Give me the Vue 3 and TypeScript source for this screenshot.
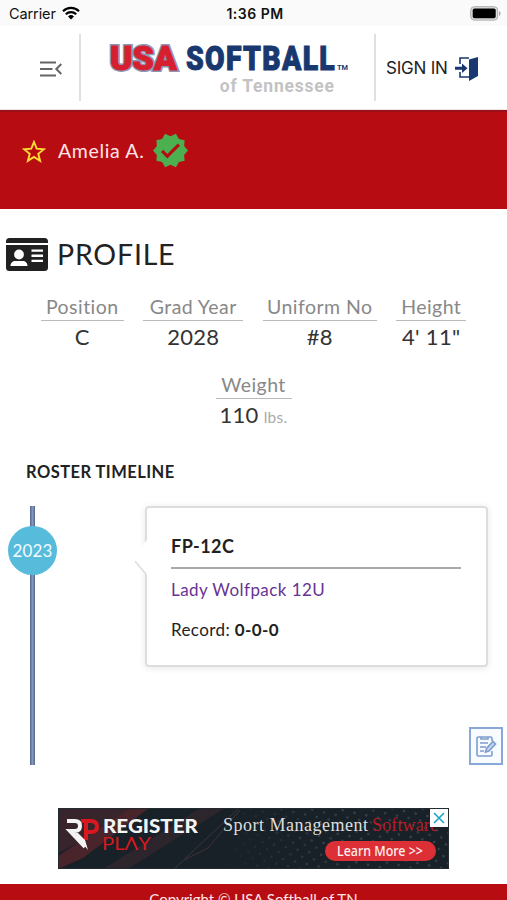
<script setup lang="ts">
interface Stat {
  label: string
  value: string
  unit?: string
  width: number
}

const stats: Stat[] = [
  { label: 'Position', value: 'C', width: 83 },
  { label: 'Grad Year', value: '2028', width: 100 },
  { label: 'Uniform No', value: '#8', width: 114 },
  { label: 'Height', value: '4\' 11"', width: 70 },
  { label: 'Weight', value: '110', unit: 'lbs.', width: 76 },
]
</script>

<template>
  <div class="screen">
    <div class="status">
      <div class="carrier">
        <span>Carrier</span>
        <svg width="18" height="14" viewBox="0 0 18 14">
          <path d="M1 5.2a11.5 11.5 0 0 1 16 0M3.8 8.2a7.5 7.5 0 0 1 10.4 0" fill="none" stroke="#000" stroke-width="2.2" />
          <path d="M9 13.4 6 10.4a4.3 4.3 0 0 1 6 0z" />
        </svg>
      </div>
      <span class="clock">1:36 PM</span>
      <svg class="battery" width="31" height="15" viewBox="0 0 31 15">
        <rect x=".7" y=".7" width="27" height="13.4" rx="3.6" fill="#ddd" stroke="#aaa" />
        <rect x="2.7" y="2.5" width="23" height="9.8" rx="1.8" />
        <path d="M29 5v5q1.6-.8 1.6-2.5T29 5" fill="#aaa" />
      </svg>
    </div>

    <header class="header">
      <button class="menu" aria-label="Menu">
        <svg width="22" height="16" viewBox="0 0 22 16" fill="none" stroke="#666" stroke-width="2">
          <path d="M0 1.5h16M0 8h12.500M0 14.500h16M21.300 3l-5 5 5 5" />
        </svg>
      </button>
      <div class="logo">
        <svg width="246" height="62" viewBox="0 0 246 62">
          <g class="block-type">
            <text x="1" y="36" textLength="67" lengthAdjust="spacingAndGlyphs" class="usa-outline">USA</text>
            <text x="1" y="36" textLength="67" lengthAdjust="spacingAndGlyphs" class="usa">USA</text>
            <text x="89.500" y="36" textLength="173" transform="scale(.86 1)" class="softball">SOFTBALL</text>
          </g>
          <text x="228" y="36" textLength="11" lengthAdjust="spacingAndGlyphs" class="tm">TM</text>
          <text x="120.500" y="58" textLength="124" transform="scale(.92 1)" class="state">of Tennessee</text>
        </svg>
      </div>
      <div class="signin">
        <span>SIGN IN</span>
        <svg width="24" height="26" viewBox="0 0 24 26">
          <path d="M5 8V2h9M5 16v5h9" fill="none" stroke="#18386f" stroke-width="1.600" />
          <path d="M14 3.500 23 1v19l-9 5z" fill="#18386f" />
          <path d="M0 10.700h7V7.500l5.500 4.700L7 17v-3.300H0z" fill="#18386f" />
        </svg>
      </div>
    </header>

    <section class="banner">
      <svg width="24" height="24" viewBox="0 0 24 24">
        <path d="m12 2 2.700 6.700 7.200.5-5.600 4.600 1.800 7.100L12 17l-6.100 3.900 1.800-7.100-5.600-4.600 7.200-.5z" fill="none" stroke="#fddc35" stroke-width="1.900" />
      </svg>
      <span class="name">Amelia A.</span>
      <svg width="35" height="35" viewBox="1 1 22 22">
        <path d="m23 12-2.440-2.780.340-3.680-3.610-.820-1.890-3.180L12 3 8.600 1.540 6.710 4.720l-3.610.810.340 3.680L1 12l2.440 2.780-.340 3.690 3.610.820 1.890 3.180L12 21l3.400 1.460 1.890-3.180 3.610-.820-.340-3.680zm-13 5-4-4 1.410-1.410L10 14.170l6.590-6.590L18 9z" fill="#4caf50" />
      </svg>
    </section>

    <main>
      <h1 class="title">
        <svg width="42" height="33" viewBox="0 0 42 33">
          <path d="M0 5V3.500A3.500 3.500 0 0 1 3.500 0h35A3.500 3.500 0 0 1 42 3.500V5z" fill="#202020" />
          <path d="M0 7h42v22.500a3.500 3.500 0 0 1-3.500 3.500h-35A3.500 3.500 0 0 1 0 29.500z" fill="#202020" />
          <circle cx="13" cy="16.500" r="4.900" fill="#fff" />
          <path d="M4.500 28c0-3 2-5 5-5h7c3 0 5 2 5 5zM25.500 11.500h11.500v2.300H25.500zM25.500 16.600h11.500v2.300H25.500zM25.500 21.700h11.500v2.300H25.500z" fill="#fff" />
        </svg>
        <span>PROFILE</span>
      </h1>

      <div class="stats">
        <div v-for="s in stats" :key="s.label" class="stat" :style="{ width: s.width + 'px' }">
          <div class="label">{{ s.label }}</div>
          <div class="value">{{ s.value }}<small v-if="s.unit">{{ s.unit }}</small></div>
        </div>
      </div>

      <h2 class="subtitle">ROSTER TIMELINE</h2>

      <div class="timeline">
        <div class="track"><div class="year">2023</div></div>
        <article class="card">
          <svg class="pointer" width="17" height="36" viewBox="0 0 17 36">
            <path d="M17 0 2 18l15 17z" fill="#fff" />
            <path d="M5 21.300 16 34" stroke="#ddd" stroke-width="1.500" />
          </svg>
          <h3>FP-12C</h3>
          <a class="team">Lady Wolfpack 12U</a>
          <p>Record: <b>0-0-0</b></p>
        </article>
        <button class="note" aria-label="Notes">
          <svg width="22" height="23" viewBox="0 0 22 23" fill="none" stroke="#7d9dce" stroke-width="1.600">
            <path d="M17 6V3.500Q17 2 15.500 2h-12Q2 2 2 3.500v16Q2 21 3.500 21h12q1.500 0 1.500-1.500V16M6 2v2h7V2M5 8h8M5 12h6M5 16h4" />
            <path d="m10.500 17 1-3.500 6.500-7 2.500 2.500-6.500 7z" fill="#c5d5ec" />
          </svg>
        </button>
      </div>
    </main>

    <div class="ad">
      <svg width="391" height="61" viewBox="0 0 391 61">
        <defs>
          <pattern id="dots" width="12" height="12" patternUnits="userSpaceOnUse" patternTransform="rotate(12)">
            <circle cx="3" cy="3" r="1.300" fill="#3a454b" />
            <circle cx="9" cy="9" r="1.300" fill="#344047" />
          </pattern>
          <linearGradient id="fade">
            <stop offset="0" stop-color="#fff" stop-opacity="0" />
            <stop offset=".5" stop-color="#fff" />
          </linearGradient>
          <mask id="dotmask"><rect x="160" width="231" height="61" fill="url(#fade)" /></mask>
        </defs>
        <rect width="391" height="61" fill="#182127" />
        <path d="M0 0h90L0 45z" fill="#38252b" />
        <path d="m73 0h18L25 50 0 61V48z" fill="#49242b" />
        <path d="m117 16 25-16h25L70 61H45z" fill="#2c252c" />
        <path d="M116 61 181 0M126 52l24-12 32-38" stroke="#40323a" fill="none" />
        <rect x="160" width="231" height="61" fill="url(#dots)" mask="url(#dotmask)" />
        <g fill="none" stroke-width="4">
          <path d="M23 13h10q6 0 6 5.500T33 24h-6" stroke="#d7191f" />
          <path d="M28 15v17" stroke="#d7191f" />
          <path d="M9 13h8q5 0 5 5t-5 5h-5l15 16" stroke="#f4f4f4" />
        </g>
        <path d="m20 25 7 7 3 10-14-17z" fill="#f4f4f4" />
        <text x="45" y="24.500" textLength="95" lengthAdjust="spacingAndGlyphs" class="ad-register">REGISTER</text>
        <text x="44" y="42" textLength="49" lengthAdjust="spacingAndGlyphs" class="ad-play">PLΛY</text>
        <text x="165" y="23" textLength="145" class="ad-serif">Sport Management</text>
        <text x="314" y="23" textLength="66" class="ad-serif ad-red">Software</text>
        <rect x="267" y="33" width="111" height="20" rx="10" fill="#dc2f36" />
        <text x="279" y="48" textLength="86" lengthAdjust="spacingAndGlyphs" class="ad-cta">Learn More &gt;&gt;</text>
        <rect x="372" y="1" width="18" height="18" fill="#fff" />
        <path d="m376 5 10 10M386 5l-10 10" stroke="#18a5c7" stroke-width="1.600" />
        <path d="M.5.5h390v60H.5z" fill="none" stroke="#242b30" />
      </svg>
    </div>

    <footer class="footer">Copyright © USA Softball of TN</footer>
  </div>
</template>

<style>
body {
  background: #fff;
  overflow: hidden;
}
</style>

<style scoped>
.screen {
  width: 507px;
  height: 900px;
  display: flex;
  flex-direction: column;
  overflow: hidden;
  font-family: Lato, "Open Sans", sans-serif;
  font-variant-ligatures: none;
  color: #222;
}
button {
  border: 0;
  padding: 0;
  background: none;
}
svg {
  display: block;
  flex: none;
}
.status {
  flex: none;
  height: 26px;
  padding: 0 6px 0 9px;
  display: grid;
  grid-template-columns: 1fr auto 1fr;
  align-items: center;
  background: #fafafa;
  font: 14.500px Inter, sans-serif;
  color: #111;
}
.carrier {
  display: flex;
  align-items: center;
  gap: 6px;
  letter-spacing: -0.1px;
}
.carrier svg {
  margin-top: -1px;
}
.clock {
  font-weight: 600;
  font-size: 14px;
  letter-spacing: 0.5px;
}
.battery {
  justify-self: end;
}
.header {
  flex: none;
  height: 84px;
  box-sizing: border-box;
  border-bottom: 1px solid #f1e5e5;
  padding: 8px 0 8px;
  display: grid;
  grid-template-columns: 79px 297px 131px;
}
.menu {
  display: flex;
  justify-content: center;
  align-items: center;
  padding-left: 23px;
  padding-top: 3px;
}
.logo {
  border-left: 2px solid #e0e0e0;
  border-right: 2px solid #e0e0e0;
  padding-left: 28px;
}
.block-type {
  font: 900 33px Roboto, sans-serif;
  stroke-width: 1;
}
.usa-outline {
  fill: #8d96b5;
  stroke: #8d96b5;
  stroke-width: 4;
}
.usa {
  fill: #d6202f;
  stroke: #d6202f;
}
.softball {
  fill: #18386f;
  stroke: #18386f;
}
.tm {
  font: 700 7px Roboto, sans-serif;
  fill: #18386f;
}
.state {
  font: 700 19px Roboto, sans-serif;
  fill: #c3c3c3;
}
.signin {
  display: flex;
  align-items: center;
  gap: 7px;
  padding: 3px 0 0 10px;
  font: 17px Inter, sans-serif;
  letter-spacing: -0.2px;
}
.signin span {
  margin-top: -3px;
}
.banner {
  flex: none;
  height: 99px;
  box-sizing: border-box;
  border-top: 2px solid #98101a;
  background: #b80c13;
  padding: 21px 22px 0;
  display: flex;
  align-items: flex-start;
}
.banner > svg:first-child {
  margin-top: 7px;
}
.name {
  width: 86px;
  margin: 6px 9px 0 12px;
  font-size: 19.500px;
  line-height: 24px;
  letter-spacing: 0.650px;
  white-space: nowrap;
  color: #ffe4e6;
}
main {
  flex: none;
  height: 599px;
  box-sizing: border-box;
  padding-top: 25px;
}
.title {
  margin: 0;
  padding-left: 6px;
  height: 40px;
  display: flex;
  align-items: center;
  gap: 9px;
  font-size: 28.500px;
  font-weight: 400;
  letter-spacing: 0.800px;
}
.stats {
  display: flex;
  flex-wrap: wrap;
  justify-content: center;
  gap: 0 19.500px;
  padding-top: 21px;
}
.stat {
  height: 78px;
  text-align: center;
  white-space: nowrap;
}
.label {
  height: 25px;
  line-height: 23px;
  border-bottom: 1px solid #bbb;
  font-size: 19.500px;
  letter-spacing: 0.450px;
  color: #888;
}
.value {
  line-height: 31px;
  font-size: 22px;
  letter-spacing: 0.300px;
  color: #333;
}
.value small {
  margin-left: 5px;
  font-size: 15.500px;
  color: #aaa;
}
.subtitle {
  margin: 0;
  padding: 11px 0 0 26px;
  font-size: 16.500px;
  line-height: 20px;
  letter-spacing: 0.450px;
  font-weight: 700;
}
.timeline {
  position: relative;
  height: 259px;
  margin-top: 24px;
  padding: 0 19px 0 8px;
  display: grid;
  grid-template-columns: 49px 1fr;
  column-gap: 88px;
  align-items: start;
}
.track {
  height: 259px;
  padding-top: 20px;
  box-sizing: border-box;
  background: linear-gradient(90deg, #536588, #8599bc 50%, #536588) center / 5px 100% no-repeat;
}
.year {
  height: 49px;
  border-radius: 50%;
  background: #57bbdb;
  color: #f3fbff;
  text-align: center;
  font-size: 17px;
  letter-spacing: 0.200px;
  line-height: 49px;
}
.card {
  position: relative;
  height: 161px;
  box-sizing: border-box;
  border: 2px solid #ddd;
  border-radius: 4px;
  padding: 22px 25px 0 24px;
  box-shadow: 0 1px 7px rgba(0, 0, 0, 0.1);
}
.pointer {
  position: absolute;
  left: -17px;
  top: 32px;
}
h3 {
  margin: 0;
  height: 37px;
  line-height: 32px;
  border-bottom: 2px solid #aaa;
  font-size: 18px;
  letter-spacing: 0.450px;
  font-weight: 700;
}
.team {
  display: block;
  padding-top: 9px;
  color: #673394;
  font-size: 17px;
  letter-spacing: 0.440px;
  line-height: 24px;
}
.card p {
  margin: 16px 0 0;
  font-size: 17px;
  letter-spacing: 0.400px;
  line-height: 24px;
}
.note {
  position: absolute;
  left: 469px;
  top: 221px;
  width: 34px;
  height: 38px;
  box-sizing: border-box;
  display: flex;
  align-items: center;
  justify-content: center;
  border: 2px solid #88a8d7;
  background: #f8fbff;
}
.ad {
  flex: none;
  height: 76px;
  padding-left: 58px;
  box-sizing: border-box;
}
.ad-register {
  font: 900 19px Lato, sans-serif;
  fill: #f4f4f4;
}
.ad-play {
  font: 400 17.500px Lato, sans-serif;
  fill: #d7191f;
}
.ad-serif {
  font: 18px "Liberation Serif", serif;
  fill: #dedede;
}
.ad-red {
  fill: #b61c25;
}
.ad-cta {
  font: 500 14px "Noto Sans", sans-serif;
  fill: #fff0f0;
}
.footer {
  flex: none;
  height: 40px;
  padding-top: 5px;
  background: #b80c13;
  color: #ffe6e7;
  text-align: center;
  font-size: 15px;
  line-height: 20px;
}
</style>
